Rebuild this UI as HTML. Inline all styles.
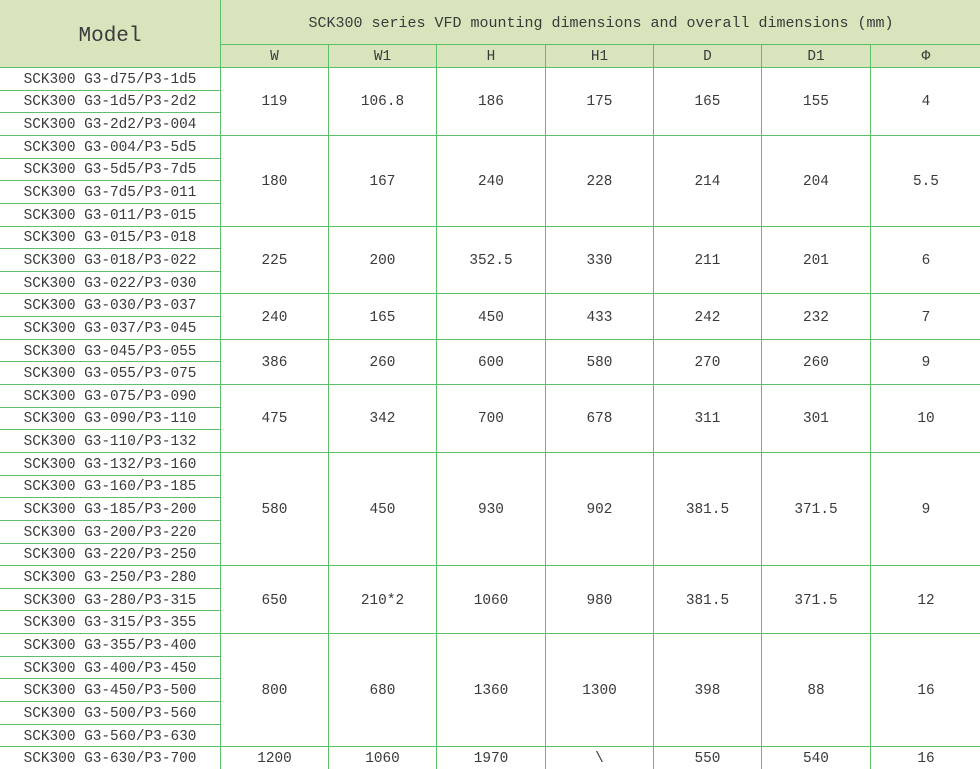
<!DOCTYPE html><html><head><meta charset="utf-8"><style>
body{margin:0;width:980px;height:768px;overflow:hidden;background:#fff}
.g{display:grid;width:981px;height:769px;background:#5dbf6a;gap:1px;
grid-template-columns:220px 107px 107px 108px 107px 107px 108px 1fr;
grid-template-rows:44px 22px repeat(31,1fr);
font-family:"Liberation Mono",monospace;font-size:14.4px;color:#3a3a3a}
.g>div{background:#fff;display:flex;align-items:center;justify-content:center;white-space:nowrap;padding-top:2px;box-sizing:border-box}
.h{background:#d8e4bc!important}
</style></head><body><div class="g">
<div class="h" style="grid-row:1/3;grid-column:1;font-size:21px;padding-top:6px">Model</div>
<div class="h" style="grid-row:1;grid-column:2/9;font-size:15px">SCK300 series VFD mounting dimensions and overall dimensions (mm)</div>
<div class="h">W</div><div class="h">W1</div><div class="h">H</div><div class="h">H1</div><div class="h">D</div><div class="h">D1</div><div class="h">Φ</div>
<div style="grid-row:3;grid-column:1">SCK300 G3-d75/P3-1d5</div>
<div style="grid-row:4;grid-column:1">SCK300 G3-1d5/P3-2d2</div>
<div style="grid-row:5;grid-column:1">SCK300 G3-2d2/P3-004</div>
<div style="grid-row:6;grid-column:1">SCK300 G3-004/P3-5d5</div>
<div style="grid-row:7;grid-column:1">SCK300 G3-5d5/P3-7d5</div>
<div style="grid-row:8;grid-column:1">SCK300 G3-7d5/P3-011</div>
<div style="grid-row:9;grid-column:1">SCK300 G3-011/P3-015</div>
<div style="grid-row:10;grid-column:1">SCK300 G3-015/P3-018</div>
<div style="grid-row:11;grid-column:1">SCK300 G3-018/P3-022</div>
<div style="grid-row:12;grid-column:1">SCK300 G3-022/P3-030</div>
<div style="grid-row:13;grid-column:1">SCK300 G3-030/P3-037</div>
<div style="grid-row:14;grid-column:1">SCK300 G3-037/P3-045</div>
<div style="grid-row:15;grid-column:1">SCK300 G3-045/P3-055</div>
<div style="grid-row:16;grid-column:1">SCK300 G3-055/P3-075</div>
<div style="grid-row:17;grid-column:1">SCK300 G3-075/P3-090</div>
<div style="grid-row:18;grid-column:1">SCK300 G3-090/P3-110</div>
<div style="grid-row:19;grid-column:1">SCK300 G3-110/P3-132</div>
<div style="grid-row:20;grid-column:1">SCK300 G3-132/P3-160</div>
<div style="grid-row:21;grid-column:1">SCK300 G3-160/P3-185</div>
<div style="grid-row:22;grid-column:1">SCK300 G3-185/P3-200</div>
<div style="grid-row:23;grid-column:1">SCK300 G3-200/P3-220</div>
<div style="grid-row:24;grid-column:1">SCK300 G3-220/P3-250</div>
<div style="grid-row:25;grid-column:1">SCK300 G3-250/P3-280</div>
<div style="grid-row:26;grid-column:1">SCK300 G3-280/P3-315</div>
<div style="grid-row:27;grid-column:1">SCK300 G3-315/P3-355</div>
<div style="grid-row:28;grid-column:1">SCK300 G3-355/P3-400</div>
<div style="grid-row:29;grid-column:1">SCK300 G3-400/P3-450</div>
<div style="grid-row:30;grid-column:1">SCK300 G3-450/P3-500</div>
<div style="grid-row:31;grid-column:1">SCK300 G3-500/P3-560</div>
<div style="grid-row:32;grid-column:1">SCK300 G3-560/P3-630</div>
<div style="grid-row:33;grid-column:1">SCK300 G3-630/P3-700</div>

<div style="grid-row:3/6">119</div><div style="grid-row:3/6">106.8</div><div style="grid-row:3/6">186</div><div style="grid-row:3/6">175</div><div style="grid-row:3/6">165</div><div style="grid-row:3/6">155</div><div style="grid-row:3/6">4</div>
<div style="grid-row:6/10">180</div><div style="grid-row:6/10">167</div><div style="grid-row:6/10">240</div><div style="grid-row:6/10">228</div><div style="grid-row:6/10">214</div><div style="grid-row:6/10">204</div><div style="grid-row:6/10">5.5</div>
<div style="grid-row:10/13">225</div><div style="grid-row:10/13">200</div><div style="grid-row:10/13">352.5</div><div style="grid-row:10/13">330</div><div style="grid-row:10/13">211</div><div style="grid-row:10/13">201</div><div style="grid-row:10/13">6</div>
<div style="grid-row:13/15">240</div><div style="grid-row:13/15">165</div><div style="grid-row:13/15">450</div><div style="grid-row:13/15">433</div><div style="grid-row:13/15">242</div><div style="grid-row:13/15">232</div><div style="grid-row:13/15">7</div>
<div style="grid-row:15/17">386</div><div style="grid-row:15/17">260</div><div style="grid-row:15/17">600</div><div style="grid-row:15/17">580</div><div style="grid-row:15/17">270</div><div style="grid-row:15/17">260</div><div style="grid-row:15/17">9</div>
<div style="grid-row:17/20">475</div><div style="grid-row:17/20">342</div><div style="grid-row:17/20">700</div><div style="grid-row:17/20">678</div><div style="grid-row:17/20">311</div><div style="grid-row:17/20">301</div><div style="grid-row:17/20">10</div>
<div style="grid-row:20/25">580</div><div style="grid-row:20/25">450</div><div style="grid-row:20/25">930</div><div style="grid-row:20/25">902</div><div style="grid-row:20/25">381.5</div><div style="grid-row:20/25">371.5</div><div style="grid-row:20/25">9</div>
<div style="grid-row:25/28">650</div><div style="grid-row:25/28">210*2</div><div style="grid-row:25/28">1060</div><div style="grid-row:25/28">980</div><div style="grid-row:25/28">381.5</div><div style="grid-row:25/28">371.5</div><div style="grid-row:25/28">12</div>
<div style="grid-row:28/33">800</div><div style="grid-row:28/33">680</div><div style="grid-row:28/33">1360</div><div style="grid-row:28/33">1300</div><div style="grid-row:28/33">398</div><div style="grid-row:28/33">88</div><div style="grid-row:28/33">16</div>
<div style="grid-row:33">1200</div><div style="grid-row:33">1060</div><div style="grid-row:33">1970</div><div style="grid-row:33">\</div><div style="grid-row:33">550</div><div style="grid-row:33">540</div><div style="grid-row:33">16</div>
</div></body></html>
